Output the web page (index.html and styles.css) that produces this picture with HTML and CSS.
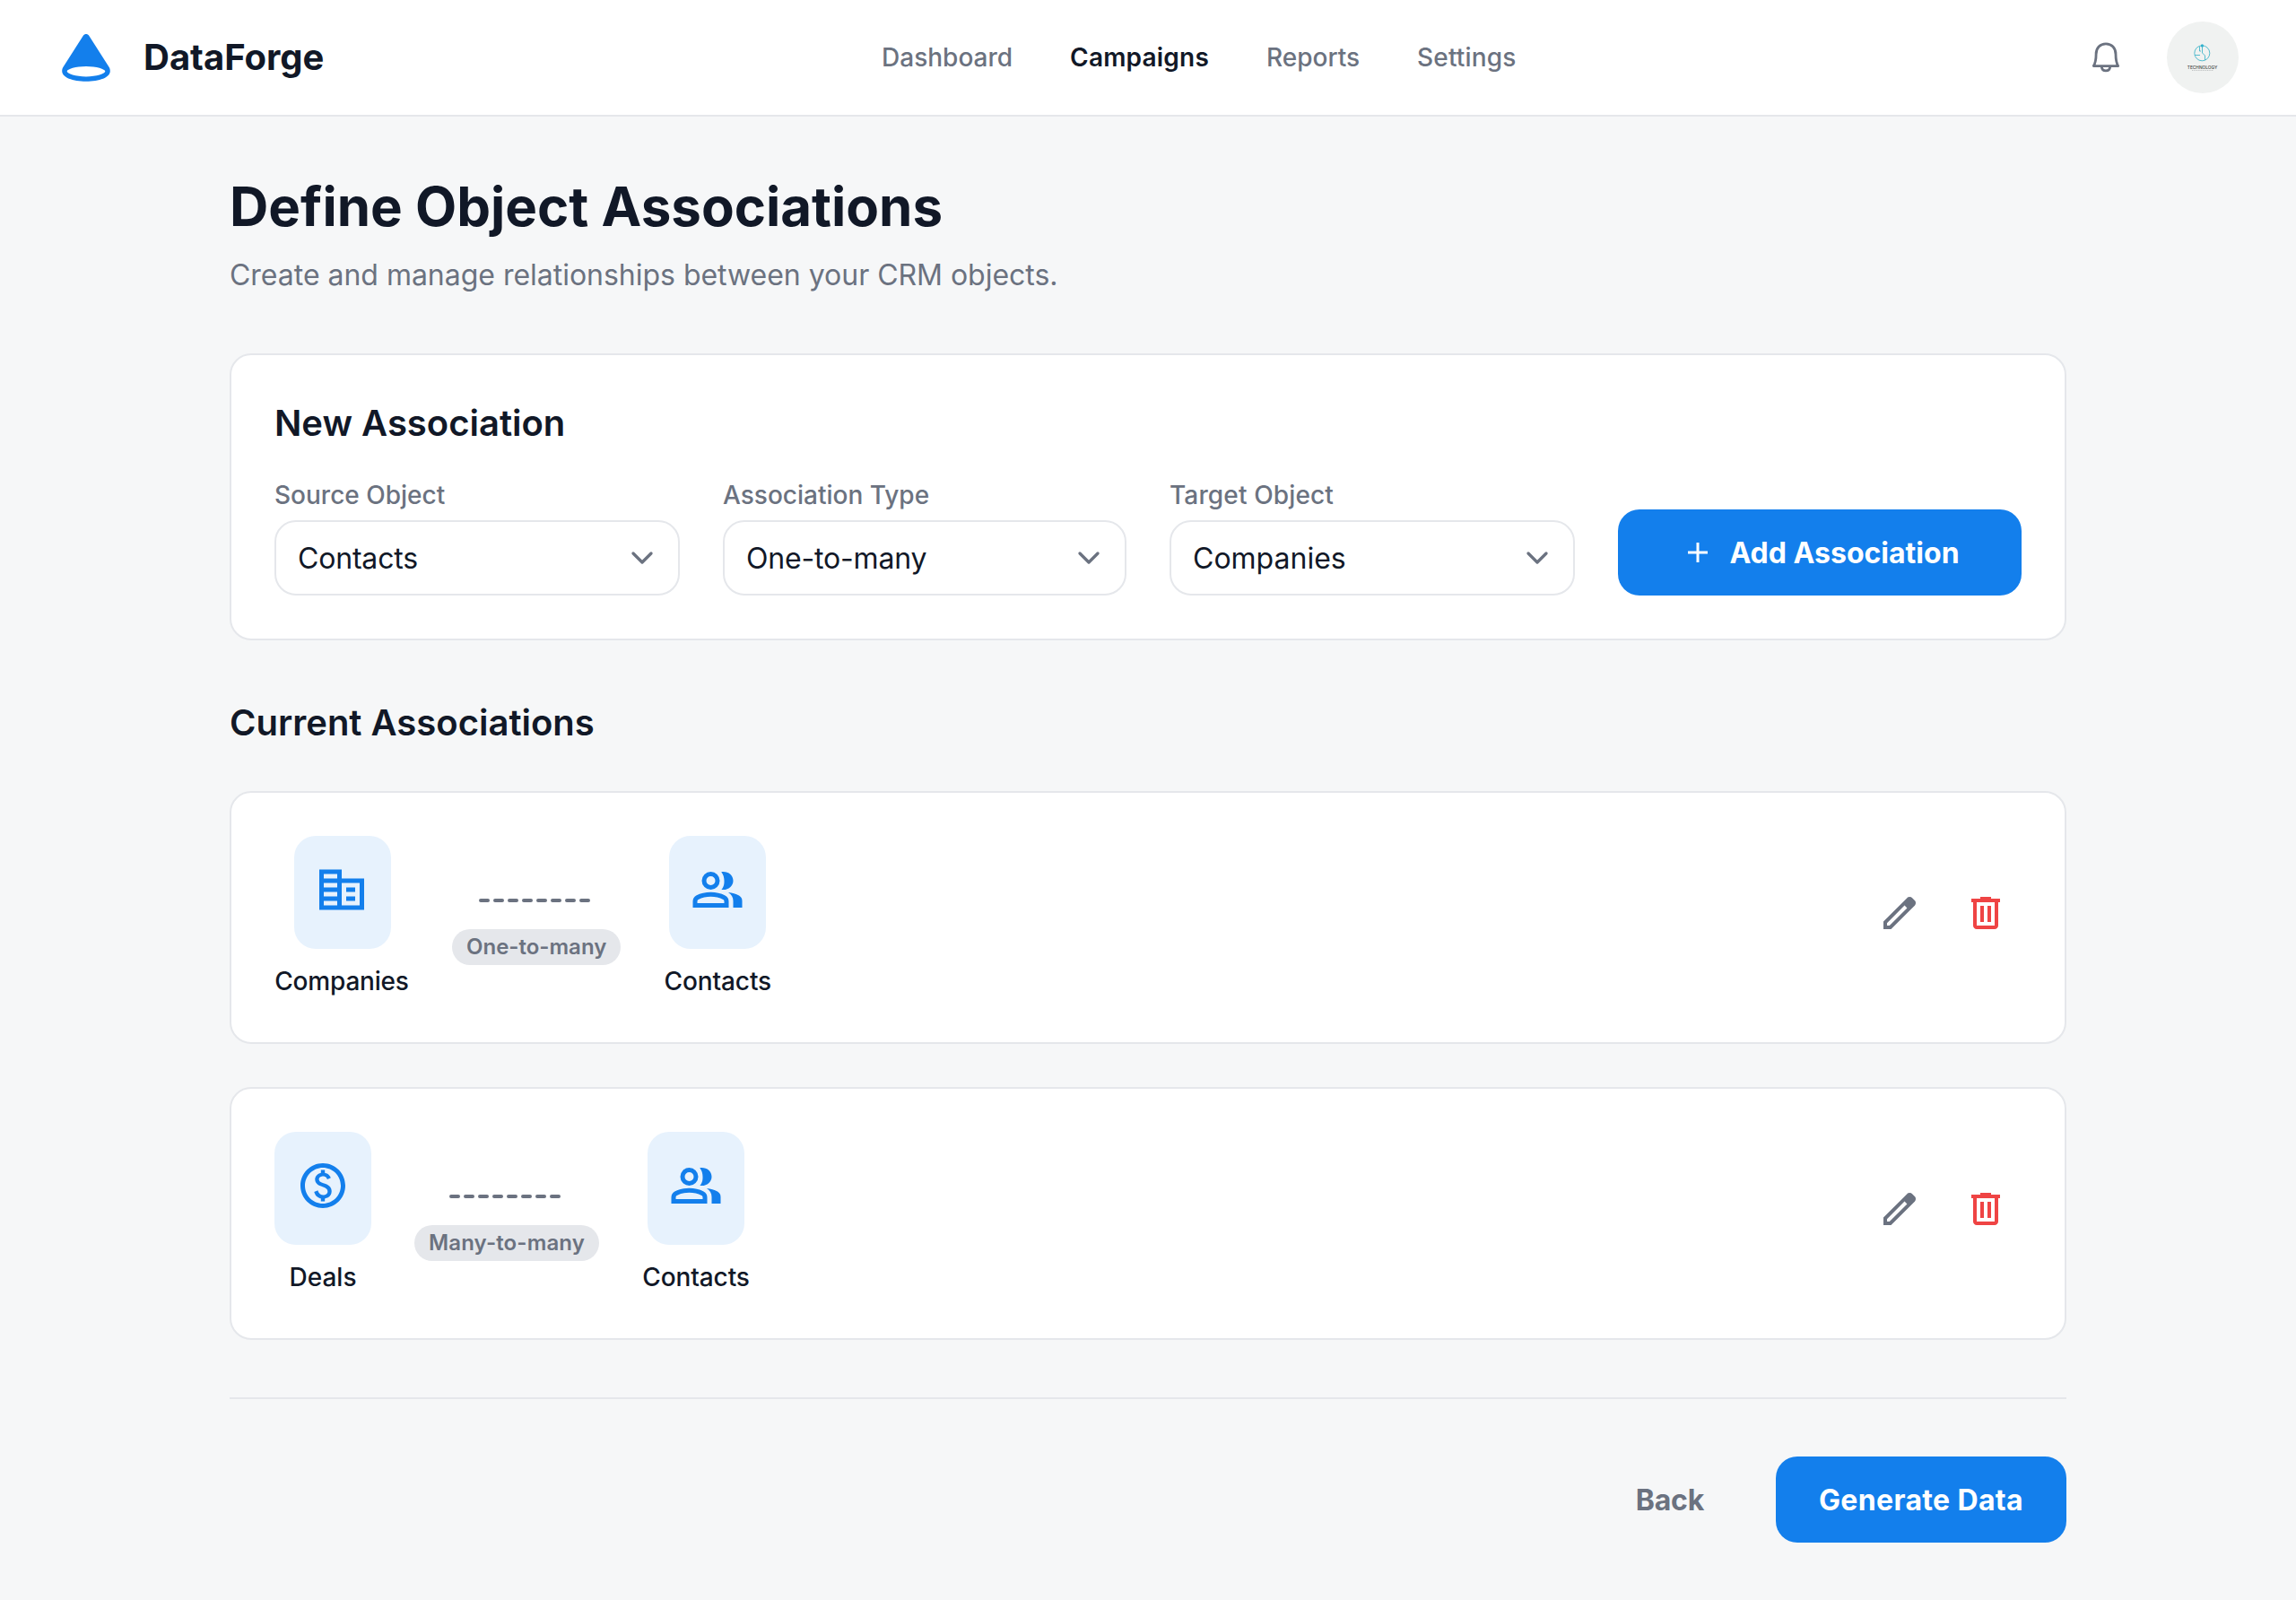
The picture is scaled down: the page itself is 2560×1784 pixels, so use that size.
FILE: index.html
```html
<!DOCTYPE html>
<html lang="en">
<head>
<meta charset="utf-8">
<title>DataForge</title>
<link rel="stylesheet" href="styles.css">
</head>
<body>
<svg class="defs" aria-hidden="true">
  <symbol id="business" viewBox="0 0 24 24"><path d="M12 7V3H2v18h20V7H12zM10 19H4v-2h6v2zm0-4H4v-2h6v2zm0-4H4V9h6v2zm0-4H4V5h6v2zm10 12h-8V9h8v10zm-2-8h-4v2h4v-2zm0 4h-4v2h4v-2z"/></symbol>
  <symbol id="group" viewBox="0 0 24 24"><path fill-rule="evenodd" d="M9 12A4 4 0 1 0 9 4A4 4 0 0 0 9 12ZM9 6A2 2 0 1 1 9 10A2 2 0 0 1 9 6ZM13.750 12C15 10.500 15 9.300 15 8C15 6.500 14.600 5.200 13.700 4.050C16.500 3.600 19 5.300 19 8C19 10.700 16.300 12.500 13.700 11.950ZM1 20V17.200C1 16.100 1.500 15.200 2.500 14.600C6.300 12.600 11.700 12.600 15.400 14.600C16.500 15.200 17 16.100 17 17.200V20ZM3 18H15V17.200C15 16.800 14.800 16.500 14.500 16.350C11.400 14.650 6.600 14.650 3.500 16.350C3.200 16.500 3 16.800 3 17.200ZM19 20V17C19 15.300 18.300 14.200 16.800 13.150C18.600 13.350 20.200 13.800 21.600 14.600C22.500 15.150 23 15.900 23 17V20Z"/></symbol>
  <symbol id="paid" viewBox="0 0 24 24"><path d="M12 2C6.480 2 2 6.480 2 12s4.480 10 10 10 10-4.480 10-10S17.520 2 12 2zm0 18c-4.410 0-8-3.590-8-8s3.590-8 8-8 8 3.590 8 8-3.590 8-8 8zm.89-8.900c-1.780-.59-2.640-.96-2.640-1.900 0-1.020 1.110-1.390 1.810-1.390 1.310 0 1.790.99 1.900 1.340l1.580-.67c-.15-.44-.82-1.910-2.660-2.230V5h-1.750v1.260c-2.600.56-2.620 2.850-2.620 2.960 0 2.270 2.250 2.910 3.350 3.310 1.580.56 2.280 1.070 2.280 2.030 0 1.130-1.050 1.610-1.980 1.610-1.820 0-2.340-1.870-2.400-2.090l-1.660.67c.63 2.190 2.280 2.780 3.020 2.960V19h1.750v-1.240c.52-.09 3.020-.59 3.020-3.220.01-1.390-.6-2.610-3-3.440z"/></symbol>
  <symbol id="edit" viewBox="0 0 24 24"><path fill-rule="evenodd" d="M3 21V16.750L16.200 3.575Q16.500 3.300 16.863 3.150Q17.225 3 17.625 3Q18.025 3 18.400 3.150Q18.775 3.300 19.050 3.600L20.425 5Q20.725 5.275 20.863 5.650Q21 6.025 21 6.400Q21 6.800 20.863 7.163Q20.725 7.525 20.425 7.825L7.250 21ZM5 19H6.400L16.200 9.225L14.775 7.800L5 17.600Z"/></symbol>
  <symbol id="delete" viewBox="0 0 24 24"><path fill-rule="evenodd" d="M7 21Q6.175 21 5.588 20.413Q5 19.825 5 19V6H4V4H9V3H15V4H20V6H19V19Q19 19.825 18.413 20.413Q17.825 21 17 21ZM17 6H7V19H17ZM9 17H11V8H9ZM13 17H15V8H13Z"/></symbol>
</svg>

<header class="topbar">
  <div class="brand">
    <svg class="brand-mark" viewBox="0 0 64 64"><path fill="#137fec" fill-rule="evenodd" d="M28.800 7.800C30.200 5.500 33.800 5.500 35.200 7.800L57.700 43C58.500 44.300 58.800 45.900 58.800 47.300C58.800 54.400 47 58.800 32 58.800S5.200 54.400 5.200 47.300C5.200 45.900 5.500 44.300 6.300 43ZM32 42C20.500 42 10.700 45 10.700 47.600S20.500 53.400 32 53.400S53.300 50.200 53.300 47.600S43.500 42 32 42Z"/></svg>
    <span>DataForge</span>
  </div>
  <nav class="nav">
    <a>Dashboard</a>
    <a class="active">Campaigns</a>
    <a>Reports</a>
    <a class="loose">Settings</a>
  </nav>
  <div class="account">
    <svg class="bell" viewBox="0 0 48 48"><path d="M10.300 33.600C12.800 29.500 13.100 27 13.100 20.500C13.100 13.500 17.500 8.900 24 8.900S35 13.500 35 20.500C35 27 35.300 29.500 37.700 33.600ZM19.300 34.500C19.900 40.400 28.100 40.400 28.700 34.500"/></svg>
    <div class="avatar">
      <svg viewBox="0 0 80 80">
        <g fill="none" stroke="#43b6c9" stroke-width="0.900"><circle cx="39.300" cy="35.300" r="8.500"/><path d="M39.500 27V35L42.500 38V43M36.500 28V33H38M31 37.500H37"/></g>
        <circle cx="39.400" cy="26.900" r="1.600" fill="#2fb0cc"/>
        <text x="22.800" y="52.900" textLength="33.500" class="avatar-name">TECHNOLOGY</text>
        <path d="M28 54.500H52" stroke="#a9adad" stroke-width="0.700" stroke-dasharray="1 0.700"/>
      </svg>
    </div>
  </div>
</header>

<main class="page">
  <h1>Define Object Associations</h1>
  <p class="lead">Create and manage relationships between your CRM objects.</p>

  <section class="card new">
    <h2>New Association</h2>
    <div class="form">
      <div class="field"><label>Source Object</label><div class="select"><span>Contacts</span><svg viewBox="0 0 24 24"><path d="M6 9l6 6 6-6"/></svg></div></div>
      <div class="field"><label>Association Type</label><div class="select"><span>One-to-many</span><svg viewBox="0 0 24 24"><path d="M6 9l6 6 6-6"/></svg></div></div>
      <div class="field"><label class="loose">Target Object</label><div class="select"><span class="even">Companies</span><svg viewBox="0 0 24 24"><path d="M6 9l6 6 6-6"/></svg></div></div>
      <button class="btn primary"><svg class="plus" viewBox="0 0 40 40"><path d="M20 9V31M9 20H31"/></svg><span>Add Association</span></button>
    </div>
  </section>

  <h2 class="list-title">Current Associations</h2>
  <div class="list">
    <article class="card row">
      <div class="object companies"><div class="tile"><svg><use href="#business"/></svg></div><span>Companies</span></div>
      <div class="link"><svg class="dashes" viewBox="0 0 128 4"><path d="M2 2H126"/></svg><span class="pill">One-to-many</span></div>
      <div class="object contacts"><div class="tile"><svg><use href="#group"/></svg></div><span>Contacts</span></div>
      <div class="actions"><svg class="edit"><use href="#edit"/></svg><svg class="delete"><use href="#delete"/></svg></div>
    </article>
    <article class="card row">
      <div class="object"><div class="tile"><svg><use href="#paid"/></svg></div><span>Deals</span></div>
      <div class="link"><svg class="dashes" viewBox="0 0 128 4"><path d="M2 2H126"/></svg><span class="pill loose">Many-to-many</span></div>
      <div class="object contacts"><div class="tile"><svg><use href="#group"/></svg></div><span>Contacts</span></div>
      <div class="actions"><svg class="edit"><use href="#edit"/></svg><svg class="delete"><use href="#delete"/></svg></div>
    </article>
  </div>

  <footer class="footer">
    <button class="btn ghost"><span>Back</span></button>
    <button class="btn primary generate"><span>Generate Data</span></button>
  </footer>
</main>
</body>
</html>
```
FILE: styles.css
```css
* { box-sizing: border-box; }
body { margin: 0; background: #f6f7f8; color: #111827; font-family: Inter, sans-serif; font-size: 32px; line-height: 48px; }
h1, h2, p { margin: 0; }
svg { display: block; flex: none; }
.defs { display: none; }

.topbar { display: flex; align-items: center; justify-content: space-between; height: 130px; padding: 0 64px; background: #fff; border-bottom: 2px solid #e5e7eb; }
.brand { display: flex; align-items: center; gap: 32px; font-size: 40px; line-height: 56px; font-weight: 700; }
.brand-mark { width: 64px; height: 64px; }
.nav { display: flex; gap: 64px; font-size: 28px; line-height: 40px; font-weight: 500; color: #6b7280; }
.nav .active { color: #111827; font-weight: 600; letter-spacing: 0.200px; }
.loose { letter-spacing: 0.140px; }
.account { display: flex; align-items: center; justify-content: flex-end; gap: 44px; width: 184px; }
.bell { width: 48px; height: 48px; fill: none; stroke: #6b7280; stroke-width: 2.800; stroke-linejoin: round; }
.avatar { width: 80px; height: 80px; border-radius: 50%; background: #f0f2f1; overflow: hidden; }
.avatar-name { font-size: 4.800px; font-weight: 500; fill: #444; }

.page { width: 2048px; margin: 0 auto; padding: 64px 0; }
h1 { font-size: 60px; line-height: 72px; font-weight: 700; }
h2 { font-size: 40px; line-height: 56px; font-weight: 600; }
.lead { height: 48px; margin-top: 16px; padding-top: 1px; color: #6b7280; letter-spacing: -0.020px; }
.card { background: #fff; border: 2px solid #e5e7eb; border-radius: 24px; padding: 48px; }
.new { margin-top: 64px; }
.form { display: grid; grid-template-columns: 452px 450px 452px 450px; gap: 48px; align-items: end; margin-top: 32px; }
.field label { display: block; margin-bottom: 8px; font-size: 28px; line-height: 40px; font-weight: 500; color: #6b7280; }
.select { display: flex; align-items: center; justify-content: space-between; height: 84px; padding: 0 20px 0 24px; border: 2px solid #e5e7eb; border-radius: 24px; }
.select span { padding-top: 1px; letter-spacing: -0.180px; }
.select .even { letter-spacing: 0; }
.select svg { width: 40px; height: 40px; fill: none; stroke: #6b7280; stroke-width: 2; stroke-linecap: round; stroke-linejoin: round; }
.btn { display: flex; align-items: center; justify-content: center; gap: 15px; height: 96px; padding: 0 48px; border: 0; border-radius: 24px; font: 700 32px/48px Inter, sans-serif; }
.btn span { padding-top: 1px; }
.primary { background: #137fec; color: #fff; }
.ghost { background: none; color: #6b7280; letter-spacing: -0.250px; }
.generate { letter-spacing: 0.355px; }
.plus { width: 40px; height: 40px; stroke: #fff; stroke-width: 3; fill: none; }

.list-title { margin-top: 64px; }
.list { display: grid; gap: 48px; margin-top: 48px; }
.row { display: flex; gap: 48px; }
.object { display: flex; flex-direction: column; align-items: center; gap: 16px; font-size: 28px; line-height: 40px; font-weight: 500; }
.companies { width: 150px; letter-spacing: -0.200px; }
.companies .tile { margin-left: 2px; padding-left: 23px; }
.contacts { width: 120px; letter-spacing: -0.120px; }
.tile { width: 108px; height: 126px; padding: 30px 24px; border-radius: 24px; background: #e7f2fd; }
.tile svg { width: 60px; height: 60px; fill: #137fec; }
.link { display: flex; flex-direction: column; align-items: center; gap: 30px; padding-top: 70px; }
.dashes { width: 128px; height: 4px; stroke: #6b7280; stroke-width: 4; stroke-dasharray: 8 8; stroke-linecap: round; }
.pill { padding: 4px 16px; border-radius: 20px; background: #e5e7eb; color: #6b7280; font-size: 24px; line-height: 32px; font-weight: 600; }
.actions { display: flex; gap: 48px; margin-left: auto; padding: 62px 16px 0 0; }
.actions svg { width: 48px; height: 48px; }
.edit { fill: #6b7280; }
.delete { fill: #ef4444; }
.footer { display: flex; justify-content: flex-end; gap: 32px; margin-top: 64px; padding-top: 64px; border-top: 2px solid #e5e7eb; }
```
